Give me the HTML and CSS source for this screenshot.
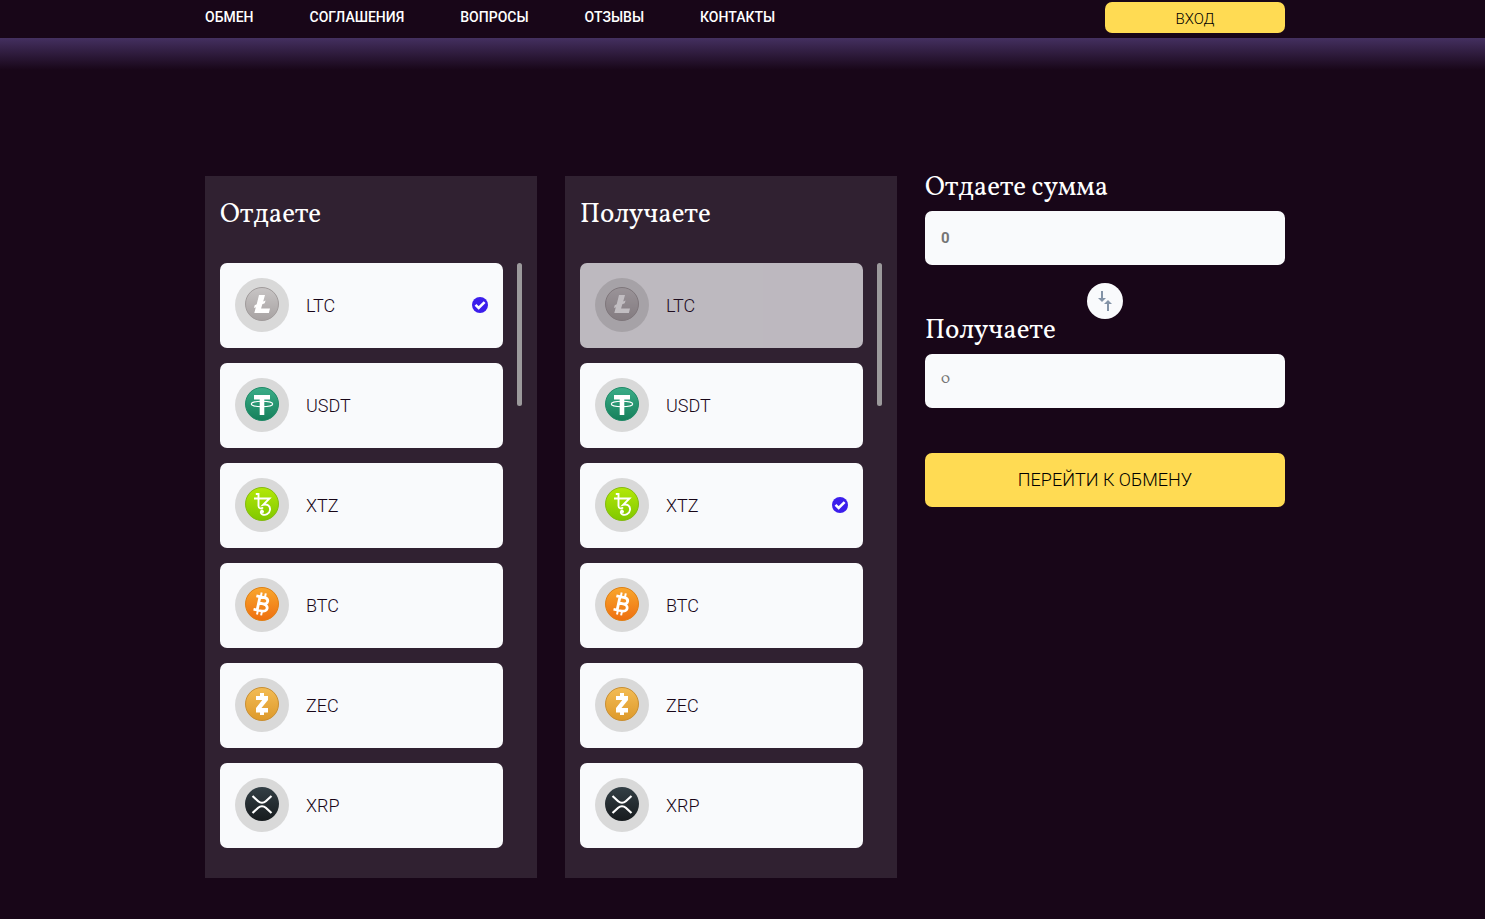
FILE: index.html
```html
<!DOCTYPE html>
<html lang="ru">
<head>
<meta charset="utf-8">
<meta name="viewport" content="width=device-width, initial-scale=1">
<title>Обмен</title>
<link rel="stylesheet" href="styles.css">
</head>
<body>
<svg class="sprite" aria-hidden="true">
  <defs>
    <linearGradient id="g-ltc" x1="0" y1="0" x2="0" y2="1"><stop offset="0" stop-color="#c8c5c5"/><stop offset="1" stop-color="#a7a2a2"/></linearGradient>
    <linearGradient id="g-usdt" x1="0" y1="0" x2="0" y2="1"><stop offset="0" stop-color="#3bad88"/><stop offset="1" stop-color="#15805b"/></linearGradient>
    <linearGradient id="g-xtz" x1="0" y1="0" x2="0" y2="1"><stop offset="0" stop-color="#b3e808"/><stop offset="1" stop-color="#80c800"/></linearGradient>
    <linearGradient id="g-btc" x1="0" y1="0" x2="0" y2="1"><stop offset="0" stop-color="#f9a72d"/><stop offset="1" stop-color="#ee6f10"/></linearGradient>
    <linearGradient id="g-zec" x1="0" y1="0" x2="0" y2="1"><stop offset="0" stop-color="#f3bc55"/><stop offset="1" stop-color="#dd992a"/></linearGradient>
    <linearGradient id="g-xrp" x1="0" y1="0" x2="0" y2="1"><stop offset="0" stop-color="#333f45"/><stop offset="1" stop-color="#171b1e"/></linearGradient>
    <symbol id="ltc" viewBox="0 0 34 34">
      <circle cx="17" cy="17" r="16.5" fill="url(#g-ltc)" stroke="#a09b9b"/>
      <path fill="#fff" d="M14 8h6l-1.800 6.500 2.400-1-.9 2.800-2.400 1-1.200 4.200h8.900l-1.100 4.500H9.300l1.500-5.800-1.900.8.800-2.800 2-.9z"/>
    </symbol>
    <symbol id="usdt" viewBox="0 0 34 34">
      <circle cx="17" cy="17" r="16.500" fill="url(#g-usdt)" stroke="#218a67"/>
      <path fill="#fff" d="M9 8h16v4.500h-5.700v15.500h-4.600V12.500H9z"/>
      <ellipse cx="17" cy="17" rx="10.700" ry="2.700" fill="none" stroke="#fff" stroke-width="1.100"/>
    </symbol>
    <symbol id="xtz" viewBox="0 0 34 34">
      <circle cx="17" cy="17" r="16.500" fill="url(#g-xtz)" stroke="#85ba12"/>
      <path fill="none" stroke="#fff" stroke-width="1.900" d="M9 11.500h15.500l-6.300 6.300c4.300-1 7.300 1.400 6.800 5.200-.5 4-4.700 5.800-7.700 4.300-2.300-1.200-1.700-4 .3-4.100M13.500 6v13c0 2.800 3.200 2.900 4.500 1.400M10.800 7h2.700"/>
      <circle cx="17.500" cy="24.500" r="1.500" fill="#fff"/>
    </symbol>
    <symbol id="btc" viewBox="0 0 34 34">
      <circle cx="17" cy="17" r="16.500" fill="url(#g-btc)" stroke="#df8016"/>
      <g transform="rotate(12 17 17)" fill="none" stroke="#fff">
        <path stroke-width="2.800" d="M13.500 10v14M9.800 10.200h8.400c5 0 5 6.300 0 6.300h-4.700M18.200 16.700c6.300 0 6.300 7.200 0 7.200H9.800"/>
        <path stroke-width="2" d="M14.300 5.800v4M18.500 5.800v4M14.300 24v4.300M18.500 24v4.300"/>
      </g>
    </symbol>
    <symbol id="zec" viewBox="0 0 34 34">
      <circle cx="17" cy="17" r="16.500" fill="url(#g-zec)" stroke="#c88f34"/>
      <path fill="#fff" d="M15 6h4v3h4v4l-6.500 8H23v4.500h-4V28h-4v-2.500h-4V21l6.300-8H11V9h4z"/>
    </symbol>
    <symbol id="xrp" viewBox="0 0 34 34">
      <circle cx="17" cy="17" r="17" fill="url(#g-xrp)"/>
      <path fill="none" stroke="#fff" stroke-width="2.200" d="M7.500 9l5.700 5.200c2.200 2 5.400 2 7.600 0L26.500 9M7.500 26l5.700-5.200c2.200-2 5.400-2 7.600 0l5.700 5.200"/>
    </symbol>
    <symbol id="check" viewBox="0 0 16 16">
      <circle cx="8" cy="8" r="8" fill="#3c1eec"/>
      <path fill="none" stroke="#fff" stroke-width="2.600" d="M3.500 7.800l3.200 3.200 5.900-5.900"/>
    </symbol>
  </defs>
</svg>

<header class="header">
  <div class="container header__inner">
    <nav class="nav">
      <a class="nav__link" href="#">ОБМЕН</a>
      <a class="nav__link" href="#">СОГЛАШЕНИЯ</a>
      <a class="nav__link" href="#">ВОПРОСЫ</a>
      <a class="nav__link" href="#">ОТЗЫВЫ</a>
      <a class="nav__link" href="#">КОНТАКТЫ</a>
    </nav>
    <button class="button button--login" type="button">ВХОД</button>
  </div>
</header>

<main class="main">
  <form class="container exchange">
    <section class="panel">
      <h2 class="title panel__title">Отдаете</h2>
      <div class="panel__body">
        <div class="list">
          <label class="coin"><span class="coin__disc"><svg class="coin__icon"><use href="#ltc"/></svg></span><span class="coin__name">LTC</span><input class="coin__radio" type="radio" name="give" checked><svg class="coin__check"><use href="#check"/></svg></label>
          <label class="coin"><span class="coin__disc"><svg class="coin__icon"><use href="#usdt"/></svg></span><span class="coin__name">USDT</span><input class="coin__radio" type="radio" name="give"><svg class="coin__check"><use href="#check"/></svg></label>
          <label class="coin"><span class="coin__disc"><svg class="coin__icon"><use href="#xtz"/></svg></span><span class="coin__name">XTZ</span><input class="coin__radio" type="radio" name="give"><svg class="coin__check"><use href="#check"/></svg></label>
          <label class="coin"><span class="coin__disc"><svg class="coin__icon"><use href="#btc"/></svg></span><span class="coin__name">BTC</span><input class="coin__radio" type="radio" name="give"><svg class="coin__check"><use href="#check"/></svg></label>
          <label class="coin"><span class="coin__disc"><svg class="coin__icon"><use href="#zec"/></svg></span><span class="coin__name">ZEC</span><input class="coin__radio" type="radio" name="give"><svg class="coin__check"><use href="#check"/></svg></label>
          <label class="coin"><span class="coin__disc"><svg class="coin__icon"><use href="#xrp"/></svg></span><span class="coin__name">XRP</span><input class="coin__radio" type="radio" name="give"><svg class="coin__check"><use href="#check"/></svg></label>
        </div>
        <div class="scrollbar"></div>
      </div>
    </section>

    <section class="panel">
      <h2 class="title panel__title">Получаете</h2>
      <div class="panel__body">
        <div class="list">
          <label class="coin coin--disabled"><span class="coin__disc"><svg class="coin__icon"><use href="#ltc"/></svg></span><span class="coin__name">LTC</span><input class="coin__radio" type="radio" name="get" disabled><svg class="coin__check"><use href="#check"/></svg></label>
          <label class="coin"><span class="coin__disc"><svg class="coin__icon"><use href="#usdt"/></svg></span><span class="coin__name">USDT</span><input class="coin__radio" type="radio" name="get"><svg class="coin__check"><use href="#check"/></svg></label>
          <label class="coin"><span class="coin__disc"><svg class="coin__icon"><use href="#xtz"/></svg></span><span class="coin__name">XTZ</span><input class="coin__radio" type="radio" name="get" checked><svg class="coin__check"><use href="#check"/></svg></label>
          <label class="coin"><span class="coin__disc"><svg class="coin__icon"><use href="#btc"/></svg></span><span class="coin__name">BTC</span><input class="coin__radio" type="radio" name="get"><svg class="coin__check"><use href="#check"/></svg></label>
          <label class="coin"><span class="coin__disc"><svg class="coin__icon"><use href="#zec"/></svg></span><span class="coin__name">ZEC</span><input class="coin__radio" type="radio" name="get"><svg class="coin__check"><use href="#check"/></svg></label>
          <label class="coin"><span class="coin__disc"><svg class="coin__icon"><use href="#xrp"/></svg></span><span class="coin__name">XRP</span><input class="coin__radio" type="radio" name="get"><svg class="coin__check"><use href="#check"/></svg></label>
        </div>
        <div class="scrollbar"></div>
      </div>
    </section>

    <section class="amounts">
      <label class="title amounts__label" for="sum-give">Отдаете сумма</label>
      <input class="field" id="sum-give" type="text" placeholder="0">
      <button class="swap" type="button" aria-label="Поменять">
        <svg class="swap__icon" viewBox="0 0 16 22"><path fill="#8393a7" d="M4 1h2v7h3l-4 4-4-4h3zM10 21h2v-7h3l-4-4-4 4h3z"/></svg>
      </button>
      <label class="title amounts__label" for="sum-get">Получаете</label>
      <input class="field field--serif" id="sum-get" type="text" placeholder="0">
      <button class="button button--submit" type="submit">ПЕРЕЙТИ К ОБМЕНУ</button>
    </section>
  </form>
</main>
</body>
</html>
```

FILE: styles.css
```css
* {
  box-sizing: border-box;
}

body {
  margin: 0;
  min-height: 100vh;
  background: #180618;
  color: #fff;
  font-family: Roboto, "Liberation Sans", sans-serif;
}

.sprite {
  position: absolute;
  width: 0;
  height: 0;
}

.container {
  max-width: 1085px;
  margin: 0 auto;
  padding-left: 5px;
}

.header__inner {
  display: flex;
  align-items: center;
  justify-content: space-between;
  padding-top: 2px;
  padding-bottom: 5px;
}

.nav {
  display: flex;
  gap: 56px;
  padding-bottom: 2px;
}

.nav__link {
  color: #fff;
  font-size: 14px;
  font-weight: 500;
  line-height: 20px;
  text-decoration: none;
}

.button {
  border: 0;
  border-radius: 7px;
  background: #ffdb53;
  color: #000;
  font-family: inherit;
  font-weight: 300;
  cursor: pointer;
}

.button--login {
  width: 180px;
  height: 31px;
  padding: 2px 0 0;
  font-size: 15px;
}

.main {
  padding: 138px 0 41px;
  background: linear-gradient(#443060, #180618 32px);
}

.exchange {
  display: grid;
  grid-template-columns: repeat(3, 1fr);
  align-items: start;
}

.title {
  margin: 0;
  font-family: Vollkorn, "Liberation Serif", serif;
  font-size: 27px;
  font-weight: 400;
  line-height: 24px;
}

.panel {
  margin-right: 28px;
  padding: 27px 15px 30px;
  background: #302131;
}

.panel__title {
  margin-bottom: 36px;
}

.panel__body {
  display: flex;
  gap: 14px;
}

.list {
  display: grid;
  flex: 1;
  gap: 15px;
}

.scrollbar {
  width: 5px;
  height: 143px;
  border-radius: 3px;
  background: #9c9a9c;
}

.coin {
  display: flex;
  align-items: center;
  height: 85px;
  padding: 0 15px 1px;
  border-radius: 7px;
  background: #f9fafc;
  color: #180618;
  cursor: pointer;
}

.coin--disabled {
  opacity: 0.7;
}

.coin__disc {
  display: flex;
  justify-content: center;
  width: 54px;
  height: 54px;
  margin-right: 17px;
  padding-top: 9px;
  border-radius: 50%;
  background: #d9d9d9;
}

.coin__icon {
  width: 34px;
  height: 34px;
}

.coin__name {
  flex: 1;
  font-size: 18px;
  font-weight: 300;
}

.coin__radio {
  width: 0;
  height: 0;
  margin: 0;
  appearance: none;
}

.coin__check {
  display: none;
  width: 16px;
  height: 16px;
}

.coin__radio:checked + .coin__check {
  display: block;
}

.amounts {
  display: flex;
  flex-direction: column;
}

.amounts__label {
  margin-bottom: 11px;
}

.field {
  width: 100%;
  height: 54px;
  padding: 0 16px;
  border: 0;
  border-radius: 7px;
  background: #f9fafc;
  font-family: inherit;
  font-size: 15px;
  font-weight: 700;
}

.field--serif {
  padding-bottom: 3px;
  font-family: Vollkorn, "Liberation Serif", serif;
  font-weight: 400;
}

.field::placeholder {
  color: #757575;
}

.swap {
  display: flex;
  align-items: center;
  justify-content: center;
  align-self: center;
  width: 36px;
  height: 36px;
  margin-top: 18px;
  padding: 0;
  border: 0;
  border-radius: 50%;
  background: #f9fafc;
  cursor: pointer;
}

.swap__icon {
  width: 16px;
  height: 22px;
}

.button--submit {
  height: 54px;
  margin-top: 45px;
  padding: 0 0 1px;
  font-size: 18px;
}

@media (max-width: 900px) {
  .exchange {
    grid-template-columns: 1fr;
    gap: 24px;
    padding-right: 5px;
  }

  .panel {
    margin-right: 0;
  }

  .nav {
    flex-wrap: wrap;
    gap: 16px;
  }
}
```
